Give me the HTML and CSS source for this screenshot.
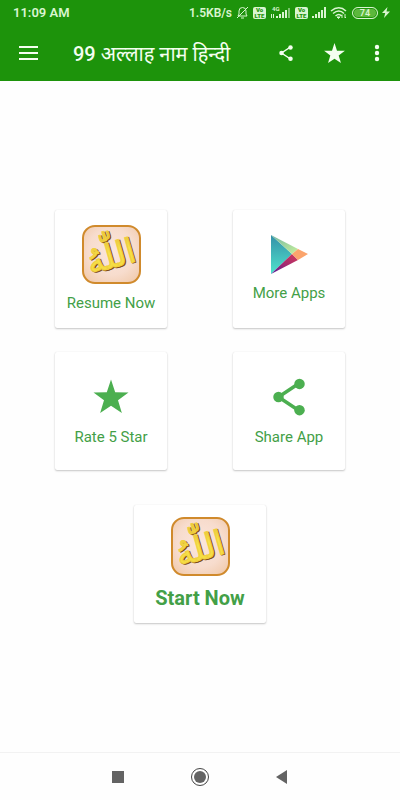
FILE: index.html
```html
<!DOCTYPE html>
<html lang="hi">
<head>
    <meta charset="UTF-8">
    <meta name="viewport" content="width=device-width, initial-scale=1.0">
    <title>99 अल्लाह नाम हिन्दी</title>
    <link rel="stylesheet" href="styles.css">
</head>
<body>
    <!-- Shared artwork -->
    <svg class="defs" aria-hidden="true">
        <defs>
            <radialGradient id="tile" cx="50%" cy="45%" r="75%">
                <stop offset="0" stop-color="#fbe6de" />
                <stop offset="0.55" stop-color="#f7dccd" />
                <stop offset="1" stop-color="#efc5a2" />
            </radialGradient>
            <linearGradient id="gold" x1="0" y1="0" x2="0" y2="1">
                <stop offset="0" stop-color="#dcb436" />
                <stop offset="0.5" stop-color="#f8e34a" />
                <stop offset="1" stop-color="#f4d83c" />
            </linearGradient>
            <linearGradient id="playLeft" x1="0" y1="0" x2="0" y2="1">
                <stop offset="0" stop-color="#3590a8" />
                <stop offset="1" stop-color="#4fe3cc" />
            </linearGradient>
            <linearGradient id="playTop" x1="0" y1="0" x2="1" y2="1">
                <stop offset="0" stop-color="#72b6a2" />
                <stop offset="1" stop-color="#c8f09c" />
            </linearGradient>
            <linearGradient id="playBottom" x1="0" y1="1" x2="1" y2="0">
                <stop offset="0" stop-color="#54189a" />
                <stop offset="0.5" stop-color="#a32a70" />
                <stop offset="1" stop-color="#d43a58" />
            </linearGradient>
            <symbol id="share" viewBox="0 0 24 24">
                <path d="M18 4 6 12l12 8" fill="none" stroke="currentColor" stroke-width="2" />
                <circle cx="18" cy="4.500" r="3" />
                <circle cx="6" cy="12" r="3" />
                <circle cx="18" cy="19.500" r="3" />
            </symbol>
            <symbol id="star" viewBox="0 0 24 24">
                <path d="M12 2l2.400 7.300 7.600.1-6 4.500 2.200 7.300L12 17l-6.200 4.200L8 13.900 2 9.400l7.600-.1z" />
            </symbol>
            <symbol id="emblem" viewBox="0 0 59 59">
                <rect x="1" y="1" width="57" height="57" rx="12" fill="url(#tile)" stroke="#d08a2c" stroke-width="2" />
                <g class="emblem-word" transform="rotate(-16 29 32)">
                    <text class="emblem-shade" x="30" y="44" text-anchor="middle">اللّٰهُ</text>
                    <text class="emblem-gold" x="29" y="43" text-anchor="middle">اللّٰهُ</text>
                </g>
            </symbol>
        </defs>
    </svg>

    <header class="top">
        <div class="status">
            <span class="clock">11:09 AM</span>
            <div class="status-icons">
                <span>1.5KB/s</span>
                <svg width="13" height="13" viewBox="0 0 13 13" fill="none" stroke="currentColor">
                    <path d="M2 10h9l-1-2V5a3.500 3.500 0 0 0-7 0v3zM5 12h3M1 12 12 1" />
                </svg>
                <span class="volte"><b>Vo</b><b>LTE</b></span>
                <svg class="signal" width="21" height="13" viewBox="0 0 21 13" fill="currentColor">
                    <text x="2" y="5">4G</text>
                    <path d="M1 8h1v4H1zM3 8h1v4H3zM6 10h2v2H6zM9 8h2v4H9zM12 6h2v6h-2zM15 4h2v8h-2z" />
                    <path opacity=".5" d="M18 2h2v10h-2z" />
                </svg>
                <span class="volte"><b>Vo</b><b>LTE</b></span>
                <svg width="14" height="13" viewBox="0 0 14 13" fill="currentColor">
                    <path d="M0 10h2v2H0zM3 8h2v4H3zM6 6h2v6H6zM9 4h2v8H9zM12 1h2v11h-2z" />
                </svg>
                <svg width="18" height="13" viewBox="0 0 18 13" fill="none" stroke="currentColor">
                    <path stroke-width="1.500" d="M1 5q8-6.500 15 0M3 7.500q6-5 11 0M5.500 10q3.500-3 6 0" />
                    <path d="M8.500 12.500 7 11h3zM12 12V9m-1 1 1-1.500M15 8v4m1-1-1 1" fill="currentColor" />
                </svg>
                <span class="battery">74</span>
                <svg width="8" height="11" viewBox="0 0 8 11" fill="currentColor">
                    <path d="M5.500 0 0 6h3.200L2 11l6-6.500H4.500z" />
                </svg>
            </div>
        </div>
        <div class="app-bar">
            <button class="icon-btn" aria-label="Menu">
                <svg width="19" height="14" viewBox="0 0 19 14" fill="currentColor">
                    <path d="M0 0h19v2H0zM0 6h19v2H0zM0 12h19v2H0z" />
                </svg>
            </button>
            <h1><b>99</b> अल्लाह नाम हिन्दी</h1>
            <button class="icon-btn" aria-label="Share">
                <svg width="18" height="18" fill="currentColor"><use href="#share" /></svg>
            </button>
            <button class="icon-btn" aria-label="Rate">
                <svg width="25" height="25" fill="currentColor"><use href="#star" /></svg>
            </button>
            <button class="icon-btn more" aria-label="More options">
                <svg width="6" height="18" viewBox="0 0 6 18" fill="currentColor">
                    <circle cx="3" cy="3" r="2.200" />
                    <circle cx="3" cy="9" r="2.200" />
                    <circle cx="3" cy="15" r="2.200" />
                </svg>
            </button>
        </div>
    </header>

    <main class="home">
        <div class="cards">
            <button class="card">
                <svg width="59" height="59"><use href="#emblem" /></svg>
                <span>Resume Now</span>
            </button>
            <button class="card">
                <svg width="39" height="39" viewBox="0 0 39 39">
                    <path d="M1 0v39l21-20z" fill="url(#playLeft)" />
                    <path d="M1 0l27 14-6 5z" fill="url(#playTop)" />
                    <path d="M1 39l21-20 6 6z" fill="url(#playBottom)" />
                    <path d="M28 14l10 5-10 6-6-6z" fill="#fba46c" />
                </svg>
                <span>More Apps</span>
            </button>
            <button class="card">
                <svg width="42" height="42"><use href="#star" /></svg>
                <span>Rate 5 Star</span>
            </button>
            <button class="card">
                <svg width="42" height="42"><use href="#share" /></svg>
                <span>Share App</span>
            </button>
        </div>
        <button class="card start">
            <svg width="59" height="59"><use href="#emblem" /></svg>
            <span>Start Now</span>
        </button>
    </main>

    <nav class="nav-bar">
        <button class="icon-btn" aria-label="Recent apps">
            <svg width="20" height="20" viewBox="0 0 20 20"><path d="M4 4h12v12H4z" fill="#636363" /></svg>
        </button>
        <button class="icon-btn" aria-label="Home">
            <svg width="20" height="20" viewBox="0 0 20 20">
                <circle cx="10" cy="10" r="8.500" fill="none" stroke="#444" />
                <circle cx="10" cy="10" r="6" fill="#636363" />
            </svg>
        </button>
        <button class="icon-btn" aria-label="Back">
            <svg width="20" height="20" viewBox="0 0 20 20"><path d="M15 3v14L4 10z" fill="#636363" /></svg>
        </button>
    </nav>
</body>
</html>
```
FILE: styles.css
```css
* {
    margin: 0;
    padding: 0;
    box-sizing: border-box;
}

body {
    min-height: 100vh;
    display: flex;
    flex-direction: column;
    background: #fefefe;
    font-family: Roboto, "Noto Sans", sans-serif;
}

svg {
    display: block;
    flex-shrink: 0;
}

button {
    border: none;
    background: none;
    color: inherit;
    font-family: inherit;
    cursor: pointer;
}

.defs {
    position: absolute;
    width: 0;
    height: 0;
}

/* Header */
.top {
    background: #1d930b;
    color: #f4fff0;
}

.status {
    display: flex;
    justify-content: space-between;
    align-items: center;
    height: 25px;
    padding: 0 10px 0 13px;
    font-size: 12px;
    font-weight: 600;
    color: #d9f5d0;
}

.clock {
    font-size: 13px;
}

.status-icons {
    display: flex;
    align-items: center;
    gap: 4px;
}

.volte {
    display: flex;
    flex-direction: column;
    align-items: center;
    width: 13px;
    height: 12px;
    border-radius: 2px;
    background: #d9f5d0;
    color: #1d930b;
    font-size: 6px;
    line-height: 6px;
}

.signal {
    font-size: 6px;
    font-weight: 700;
}

.battery {
    width: 26px;
    height: 12px;
    border: 1px solid #d9f5d0;
    border-radius: 6px;
    background: #5cb83c;
    box-shadow: inset 0 0 0 1px #1d930b;
    font-size: 9px;
    line-height: 10px;
    text-align: center;
}

.app-bar {
    display: flex;
    align-items: center;
    height: 56px;
    padding: 0 4px;
}

.app-bar h1 {
    flex: 1;
    padding-left: 21px;
    font-size: 20px;
    font-weight: 400;
    white-space: nowrap;
}

.app-bar h1 b {
    font-weight: 500;
}

.icon-btn {
    display: flex;
    justify-content: center;
    align-items: center;
    width: 48px;
    height: 46px;
}

.icon-btn.more {
    width: 38px;
}

/* Home cards */
.home {
    flex: 1;
    display: flex;
    flex-direction: column;
    justify-content: center;
    align-items: center;
    gap: 35px;
}

.cards {
    display: grid;
    grid-template-columns: 178px 178px;
    justify-items: center;
    row-gap: 24px;
}

.card {
    display: flex;
    flex-direction: column;
    justify-content: center;
    align-items: center;
    gap: 9px;
    width: 112px;
    height: 118px;
    border-radius: 2px;
    background: #fff;
    box-shadow: 0 1px 2px rgba(0, 0, 0, 0.22), 0 0 1px rgba(0, 0, 0, 0.1);
    color: #43a047;
    fill: #4caf50;
    font-size: 15px;
    line-height: 20px;
    white-space: nowrap;
}

.card svg {
    color: #4caf50;
}

.start {
    width: 132px;
    font-size: 20px;
    font-weight: 700;
    line-height: 26px;
}

.emblem-word {
    font-family: "DejaVu Sans", sans-serif;
    font-size: 34px;
    font-weight: 400;
}

.emblem-shade {
    fill: #7a4a12;
    stroke: #7a4a12;
}

.emblem-gold {
    fill: url(#gold);
    stroke: #f0d040;
}

/* System navigation */
.nav-bar {
    display: flex;
    justify-content: center;
    align-items: center;
    gap: 34px;
    height: 48px;
    border-top: 1px solid #f2f2f2;
}
```
